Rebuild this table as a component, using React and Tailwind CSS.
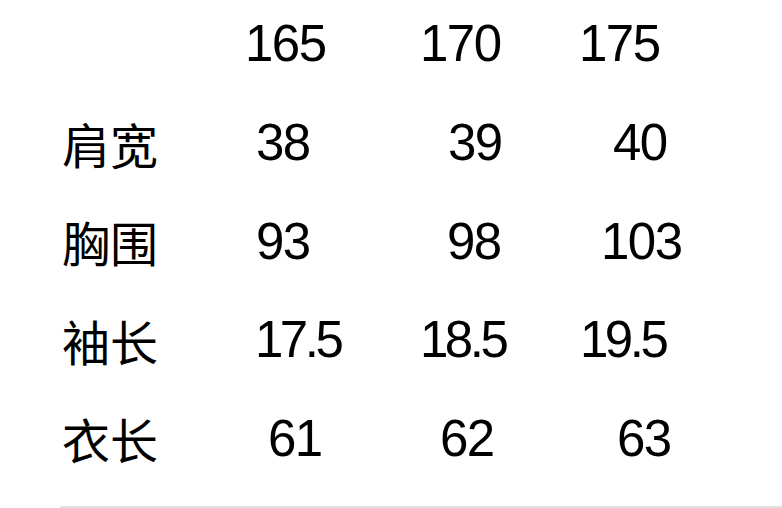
export default function App() {
  const header = [
    { v: "165", x: 0 },
    { v: "170", x: 0 },
    { v: "175", x: 0 },
  ]

  const rows = [
    { label: "肩宽", cells: [{ v: "38", x: 11 }, { v: "39", x: 28 }, { v: "40", x: 34 }] },
    { label: "胸围", cells: [{ v: "93", x: 11 }, { v: "98", x: 27 }, { v: "103", x: 22 }] },
    { label: "袖长", cells: [{ v: "17.5", x: 10 }, { v: "18.5", x: 0 }, { v: "19.5", x: 1 }] },
    { label: "衣长", cells: [{ v: "61", x: 23 }, { v: "62", x: 20 }, { v: "63", x: 38 }] },
  ]

  const Row = ({ label, cells, className = "" }) => (
    <div className={`grid grid-cols-[183px_175px_159px_1fr] items-center h-[60px] ${className}`}>
      <div className="text-[48px] leading-none text-black font-['Noto_Sans_CJK_SC',sans-serif]">{label}</div>
      {cells.map((c, i) => (
        <div
          key={i}
          className={`text-[51px] leading-none text-black font-['Liberation_Sans',Arial,sans-serif] ${
            c.v.includes(".") ? "tracking-[-3.5px]" : "tracking-[-1.5px]"
          }`}
          style={{ paddingLeft: c.x }}
        >
          {c.v}
        </div>
      ))}
    </div>
  )

  return (
    <div className="w-[782px] h-[508px] bg-white overflow-hidden">
      <div className="flex flex-col gap-[38.5px] pt-[13px] pl-[62px]">
        <Row label="" cells={header} className="mb-[1px]" />
        {rows.map((r) => (
          <Row key={r.label} label={r.label} cells={r.cells} />
        ))}
      </div>
      <div className="ml-[60px] mt-[38px] h-[2px] bg-[#e0e0e0]" />
    </div>
  )
}
